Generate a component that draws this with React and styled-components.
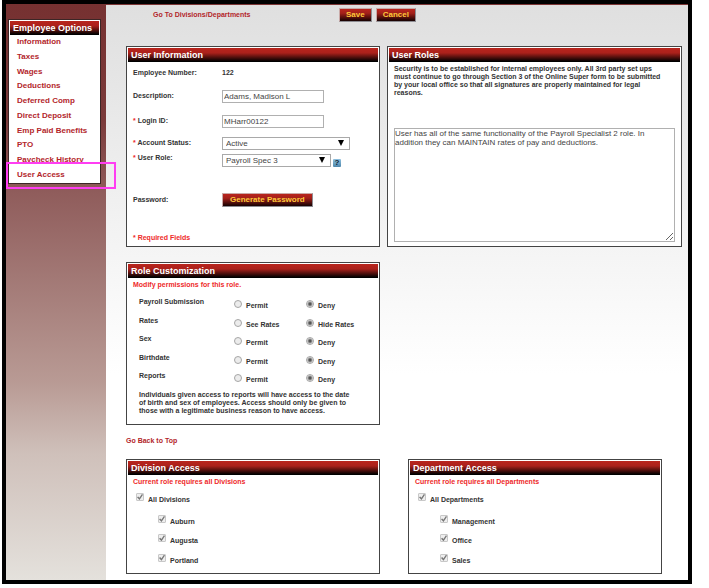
import { useState } from "react";
import styled, { createGlobalStyle } from "styled-components";

const menuItems = [
  "Information",
  "Taxes",
  "Wages",
  "Deductions",
  "Deferred Comp",
  "Direct Deposit",
  "Emp Paid Benefits",
  "PTO",
  "Paycheck History",
  "User Access",
];

const permissions = [
  { name: "Payroll Submission", options: ["Permit", "Deny"] },
  { name: "Rates", options: ["See Rates", "Hide Rates"] },
  { name: "Sex", options: ["Permit", "Deny"] },
  { name: "Birthdate", options: ["Permit", "Deny"] },
  { name: "Reports", options: ["Permit", "Deny"] },
];

const divisions = ["Auburn", "Augusta", "Portland"];
const departments = ["Management", "Office", "Sales"];

// One row of the role customization list
const PermissionRow = ({ name, options }) => {
  const [value, setValue] = useState(options[1]);
  return (
    <Permission role="radiogroup" aria-label={name}>
      <span>{name}</span>
      {options.map((option) => (
        <Option key={option}>
          <Radio
            type="radio"
            name={name}
            checked={value === option}
            onChange={() => setValue(option)}
          />
          <OptionText>{option}</OptionText>
        </Option>
      ))}
    </Permission>
  );
};

const CheckItem = ({ text }) => (
  <Option>
    <Checkbox type="checkbox" defaultChecked disabled />
    <OptionText>{text}</OptionText>
  </Option>
);

const AccessPanel = ({ title, plural, items }) => (
  <Panel>
    <PanelTitle>{title}</PanelTitle>
    <Warning>Current role requires all {plural}</Warning>
    <AllItems>
      <CheckItem text={`All ${plural}`} />
    </AllItems>
    <CheckList>
      {items.map((item) => (
        <li key={item}>
          <CheckItem text={item} />
        </li>
      ))}
    </CheckList>
  </Panel>
);

const App = () => {
  return (
    <>
      <GlobalStyle />
      <Frame id="top">
        {/* Side menu */}
        <Sidebar>
          <Menu>
            <PanelTitle>Employee Options</PanelTitle>
            <MenuList>
              {menuItems.map((item) => (
                <MenuItem key={item} $active={item === "User Access"}>
                  <MenuLink href="#">{item}</MenuLink>
                </MenuItem>
              ))}
            </MenuList>
          </Menu>
        </Sidebar>

        <Main>
          <TopBar>
            <TopLink href="#access">Go To Divisions/Departments</TopLink>
            <Button>Save</Button>
            <Button>Cancel</Button>
          </TopBar>

          <TopPanels>
            <Panel>
              <PanelTitle>User Information</PanelTitle>
              <Form>
                <span>Employee Number:</span>
                <span>122</span>

                <label htmlFor="description">Description:</label>
                <Input id="description" defaultValue="Adams, Madison L" />

                <label htmlFor="login">
                  <Required>*</Required> Login ID:
                </label>
                <Input id="login" defaultValue="MHarr00122" />

                <label htmlFor="status">
                  <Required>*</Required> Account Status:
                </label>
                <SelectBox $width={128}>
                  <Select id="status">
                    <option>Active</option>
                    <option>Inactive</option>
                  </Select>
                </SelectBox>

                <RoleLabel htmlFor="role">
                  <Required>*</Required> User Role:
                </RoleLabel>
                <RoleField>
                  <SelectBox $width={109}>
                    <Select id="role">
                      <option>Payroll Spec 3</option>
                      <option>Payroll Spec 2</option>
                    </Select>
                  </SelectBox>
                  <HelpButton type="button" aria-label="Help">
                    ?
                  </HelpButton>
                </RoleField>

                <span>Password:</span>
                <Button type="button" $wide>
                  Generate Password
                </Button>

                <Required>* Required Fields</Required>
              </Form>
            </Panel>

            <Panel>
              <PanelTitle>User Roles</PanelTitle>
              <RoleInfo>
                Security is to be established for internal employees only. All
                3rd party set ups
                <br />
                must continue to go through Section 3 of the Online Super form
                to be submitted
                <br />
                by your local office so that all signatures are properly
                maintained for legal
                <br />
                reasons.
              </RoleInfo>
              <RoleText
                aria-label="Role description"
                defaultValue="User has all of the same functionality of the Payroll Specialist 2 role. In addition they can MAINTAIN rates of pay and deductions."
              />
            </Panel>

            <Panel>
              <PanelTitle>Role Customization</PanelTitle>
              <Warning>Modify permissions for this role.</Warning>
              <PermissionList>
                {permissions.map((permission) => (
                  <PermissionRow key={permission.name} {...permission} />
                ))}
              </PermissionList>
              <Note>
                Individuals given access to reports will have access to the date
                <br />
                of birth and sex of employees. Access should only be given to
                <br />
                those with a legitimate business reason to have access.
              </Note>
            </Panel>
          </TopPanels>

          <BackLink href="#top">Go Back to Top</BackLink>

          {/* Divisions and departments */}
          <BottomPanels id="access">
            <AccessPanel
              title="Division Access"
              plural="Divisions"
              items={divisions}
            />
            <AccessPanel
              title="Department Access"
              plural="Departments"
              items={departments}
            />
          </BottomPanels>
        </Main>
      </Frame>
    </>
  );
};

const GlobalStyle = createGlobalStyle`
  * {
    box-sizing: border-box;
  }

  body {
    margin: 0;
    background: #ffffff;
    color: #333333;
    font: bold 7px/8px "Liberation Sans", Arial, sans-serif;
  }
`;

// Black frame around the whole page
const Frame = styled.div`
  display: flex;
  margin: 0 17px 4px 2px;
  border: 4px solid #000000;
  background: linear-gradient(#dfdfdf, #ffffff 370px);
`;

const Sidebar = styled.nav`
  flex: none;
  width: 100px;
  padding: 15px 5px 0 2px;
  background: linear-gradient(
    #763131,
    #7b3a3a 20%,
    #905d5c 33%,
    #b99b95 66%,
    #cfc0ba 78%,
    #e4e1dc
  );
`;

const Menu = styled.div`
  padding: 1px;
  border: 1px solid #3c2626;
  background: #ffffff;
`;

const MenuList = styled.ul`
  display: grid;
  grid-auto-rows: 1fr;
  height: 147px;
  margin: 0;
  padding: 0;
  list-style: none;
`;

const MenuItem = styled.li`
  position: relative;
  display: flex;
  align-items: center;
  padding-left: 7px;

  &::after {
    content: "";
    display: ${({ $active }) => ($active ? "block" : "none")};
    position: absolute;
    inset: -5px -17px -7px -4px;
    border: 2px solid #ff3df2;
    pointer-events: none;
  }
`;

const MenuLink = styled.a`
  color: #b3262b;
  font-size: 8px;
  text-decoration: none;
`;

const Main = styled.main`
  flex: 1;
  min-width: 0;
  padding: 0 6px 6px 20px;
  border-top: 1px solid #7a3434;
`;

const TopBar = styled.header`
  display: flex;
  align-items: center;
  gap: 4px;
  height: 19px;
  margin-bottom: 22px;
  padding-left: 27px;
`;

const TopLink = styled.a`
  width: 182px;
  color: #b3262b;
  text-decoration: none;
`;

const Button = styled.button`
  justify-self: start;
  height: 14px;
  padding: 0 ${({ $wide }) => ($wide ? 7 : 6)}px;
  border: 1px solid;
  border-color: #c9a9a7 #8d8d93 #8d8d93 #c9a9a7;
  background: linear-gradient(#b9251d, #a3201a 35%, #150101);
  color: #ffc83a;
  font: bold 8px/12px "Liberation Sans", Arial, sans-serif;
`;

const TopPanels = styled.div`
  display: grid;
  grid-template-columns: 254fr 295fr;
  gap: 15px 7px;
`;

const BottomPanels = styled.div`
  display: grid;
  grid-template-columns: 1fr 1fr;
  gap: 28px;
  padding-right: 20px;
`;

const Panel = styled.section`
  min-width: 0;
  padding: 1px;
  border: 1px solid #444444;
  background: #ffffff;
`;

const PanelTitle = styled.h2`
  height: 14px;
  margin: 0;
  padding-left: 3px;
  background: linear-gradient(#b9251d, #ab211b 35%, #000000 95%);
  color: #ffffff;
  font-size: 9px;
  line-height: 14px;
`;

const Form = styled.form`
  display: grid;
  grid-template-columns: 89px 1fr;
  grid-template-rows: 22px 24px 26px 18px 16px 64px 12px;
  align-items: center;
  padding: 0 0 1px 5px;
`;

const Required = styled.span`
  color: #ee2a2a;
`;

const Input = styled.input`
  width: 102px;
  height: 13px;
  padding: 0 1px;
  border: 1px solid #b0b0b0;
  background: #ffffff;
  color: #444444;
  font: 8px "Liberation Sans", Arial, sans-serif;
`;

// Select with its own arrow drawn over the right end
const SelectBox = styled.span`
  display: grid;
  align-items: center;
  width: ${({ $width }) => $width}px;

  &::after {
    content: "";
    grid-area: 1 / 1;
    justify-self: end;
    width: 6px;
    height: 6px;
    margin-right: 6px;
    background: #000000;
    clip-path: polygon(0 0, 100% 0, 50% 100%);
    pointer-events: none;
  }
`;

const Select = styled.select`
  grid-area: 1 / 1;
  width: 100%;
  height: 13px;
  padding: 0 3px;
  appearance: none;
  border: 1px solid #a9a9a9;
  border-radius: 0;
  background: #ffffff;
  color: #444444;
  font: 8px "Liberation Sans", Arial, sans-serif;
`;

const RoleLabel = styled.label`
  align-self: start;
  padding-top: 2px;
`;

const RoleField = styled.div`
  display: flex;
  align-items: flex-end;
  gap: 2px;
`;

const HelpButton = styled.button`
  width: 8px;
  height: 8px;
  padding: 0;
  border: 0;
  border-radius: 1px;
  background: linear-gradient(#8fc0de, #4d86ab);
  color: #0d2233;
  font: bold 8px/8px "Liberation Sans", Arial, sans-serif;
`;

const RoleInfo = styled.p`
  margin: 0;
  padding: 3px 5px 0;
  white-space: nowrap;
`;

const RoleText = styled.textarea`
  display: block;
  width: calc(100% - 10px);
  height: 114px;
  margin: 31px 5px 0;
  padding: 0;
  border: 1px solid #b0b0b0;
  color: #444444;
  font: 8px/9px "Liberation Sans", Arial, sans-serif;
`;

const Warning = styled.p`
  margin: 0;
  padding: 3px 5px 4px;
  color: #ee2a2a;
`;

const PermissionList = styled.div`
  display: grid;
  grid-auto-rows: 1fr;
  height: 93px;
  padding-left: 11px;
`;

const Permission = styled.div`
  display: grid;
  grid-template-columns: 95px 72px 1fr;
  align-items: start;
  padding-top: 5px;
`;

const Option = styled.label`
  display: flex;
  align-items: flex-start;
  gap: 4px;
`;

const OptionText = styled.span`
  padding-top: 4px;
`;

const Radio = styled.input`
  appearance: none;
  width: 8px;
  height: 8px;
  margin: 2px 0 0;
  border: 1px solid #a6a6a6;
  border-radius: 50%;
  background: #ececec;

  &:checked {
    background: radial-gradient(circle, #555555 1px, #e4e4e4 3px);
  }
`;

const Checkbox = styled.input`
  appearance: none;
  display: grid;
  place-items: center;
  width: 8px;
  height: 8px;
  margin: 1px 0 0;
  border: 1px solid #c8c8c8;
  border-radius: 1px;
  background: #eeeeee;

  &:checked::after {
    content: "";
    width: 6px;
    height: 6px;
    background: #777777;
    clip-path: polygon(0 55%, 20% 40%, 40% 62%, 82% 0, 100% 12%, 42% 100%);
  }
`;

const Note = styled.p`
  margin: 0;
  padding: 5px 11px 8px;
  white-space: nowrap;
`;

const BackLink = styled.a`
  display: block;
  margin: 12px 0 14px;
  color: #b3262b;
  text-decoration: none;
`;

const AllItems = styled.div`
  padding: 2px 0 0 8px;
`;

const CheckList = styled.ul`
  display: grid;
  grid-auto-rows: 1fr;
  height: 58px;
  margin: 10px 0 0;
  padding: 0 0 0 30px;
  list-style: none;
`;

export default App;
